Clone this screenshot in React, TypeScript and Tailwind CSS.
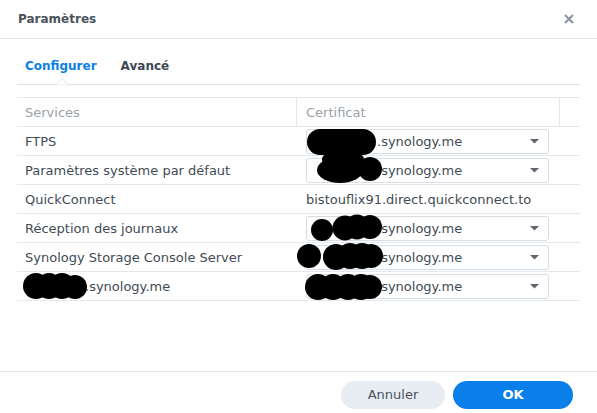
import React from 'react';

interface Row {
  service: string;
  redactedService?: boolean;
  cert: 'select' | 'text';
  certText?: string;
}

const rows: Row[] = [
  { service: 'FTPS', cert: 'select' },
  { service: 'Paramètres système par défaut', cert: 'select' },
  { service: 'QuickConnect', cert: 'text', certText: 'bistouflix91.direct.quickconnect.to' },
  { service: 'Réception des journaux', cert: 'select' },
  { service: 'Synology Storage Console Server', cert: 'select' },
  { service: 'synology.me', redactedService: true, cert: 'select' },
];

// taches de masquage (coordonnées de la page)
const Redactions: React.FC = () => (
  <svg className="pointer-events-none absolute left-0 top-0" width={597} height={413}>
    <g fill="#000">
      {/* FTPS */}
      <rect x={307} y={129} width={69} height={26} rx={13} />
      {/* Paramètres système */}
      <rect x={322} y={154} width={42} height={11} rx={5.5} />
      <ellipse cx={340} cy={170} rx={23} ry={13} />
      <circle cx={370} cy={169} r={12} />
      {/* Réception des journaux */}
      <circle cx={322} cy={230} r={11} />
      <circle cx={345} cy={228} r={12.5} />
      <circle cx={357} cy={227} r={12.5} />
      <circle cx={370} cy={227} r={12} />
      {/* Storage Console Server */}
      <circle cx={309} cy={256} r={12} />
      <circle cx={336} cy={257} r={13} />
      <circle cx={350} cy={256} r={13} />
      <circle cx={362} cy={256} r={13} />
      <circle cx={371} cy={256} r={12} />
      {/* dernière ligne */}
      <circle cx={318} cy={287} r={13} />
      <circle cx={333} cy={287} r={13} />
      <circle cx={348} cy={287} r={13} />
      <circle cx={361} cy={287} r={13} />
      <circle cx={370} cy={287} r={12} />
      <circle cx={36} cy={286} r={13} />
      <circle cx={49} cy={286} r={13} />
      <circle cx={62} cy={286} r={13} />
      <circle cx={75} cy={287} r={12} />
    </g>
  </svg>
);

const CertSelect: React.FC = () => (
  <div className="flex h-[25px] w-[243px] items-center rounded-[3px] border border-[#d7dde5] bg-white pl-[7px] pr-[9px]">
    <span className="inline-block w-[63px]" />
    <span className="flex-1 pt-px">.synology.me</span>
    <svg width="9" height="5" viewBox="0 0 9 5">
      <path d="M0 0h9L4.5 4.5z" fill="#5c6570" />
    </svg>
  </div>
);

const App: React.FC = () => {
  return (
    <div
      className="relative flex h-[413px] w-[597px] flex-col bg-white text-[13px] text-[#414b55]"
      style={{ fontFamily: '"DejaVu Sans", Verdana, sans-serif' }}
    >
      {/* en-tête */}
      <div className="flex h-[39px] shrink-0 items-center justify-between border-b border-[#e3e8ee] pl-[18px] pr-[23px]">
        <span className="text-[12px] font-bold text-[#4a525c]">Paramètres</span>
        <svg width="10" height="10" viewBox="0 0 10 10">
          <path d="M1 1l8 8M9 1l-8 8" stroke="#8c939c" strokeWidth="2" />
        </svg>
      </div>

      <div className="flex-1 px-[17px]">
        {/* onglets */}
        <div className="relative flex h-[46px] items-end gap-[24px] border-b border-[#dde3ea] pb-[9px] pl-[8px]">
          <span className="text-[12px] font-bold text-[#0a7fe6]">Configurer</span>
          <span className="text-[12px] font-bold text-[#3c4650]">Avancé</span>
          <svg className="absolute left-[39px] top-[39px]" width="12" height="7" viewBox="0 0 12 7">
            <path d="M0 6.5L6 0.5L12 6.5" fill="white" stroke="#dde3ea" strokeWidth="1" />
          </svg>
        </div>

        {/* tableau */}
        <div className="mt-[12px]">
          <div className="flex h-[30px] border-y border-[#e3e8ee] text-[#9aa1a9]">
            <div className="flex w-[280px] items-center border-r border-[#e3e8ee] pl-[8px] pt-px">Services</div>
            <div className="flex w-[263px] items-center border-r border-[#e3e8ee] pl-[9px] pt-px">Certificat</div>
            <div className="flex-1" />
          </div>
          {rows.map((row, i) => (
            <div key={i} className="flex h-[29px] items-center border-b border-[#e3e8ee]">
              <div className="w-[280px] pl-[8px] pt-px">
                {row.redactedService ? (
                  <span>
                    <span className="inline-block w-[60px]" />.{row.service}
                  </span>
                ) : (
                  row.service
                )}
              </div>
              <div className="w-[263px] pl-[9px]">
                {row.cert === 'select' ? <CertSelect /> : <span className="inline-block pt-px">{row.certText}</span>}
              </div>
            </div>
          ))}
        </div>
      </div>

      {/* pied */}
      <div className="flex h-[42px] shrink-0 justify-end gap-[8px] border-t border-[#e3e8ee] pr-[24px] pt-[9px]">
        <button className="h-[28px] w-[104px] rounded-full bg-[#e8edf3] text-[13px] text-[#4a525c]">Annuler</button>
        <button className="h-[28px] w-[120px] rounded-full bg-[#0a7fe9] text-[13px] font-bold text-white">OK</button>
      </div>

      <Redactions />
    </div>
  );
};

export default App;
